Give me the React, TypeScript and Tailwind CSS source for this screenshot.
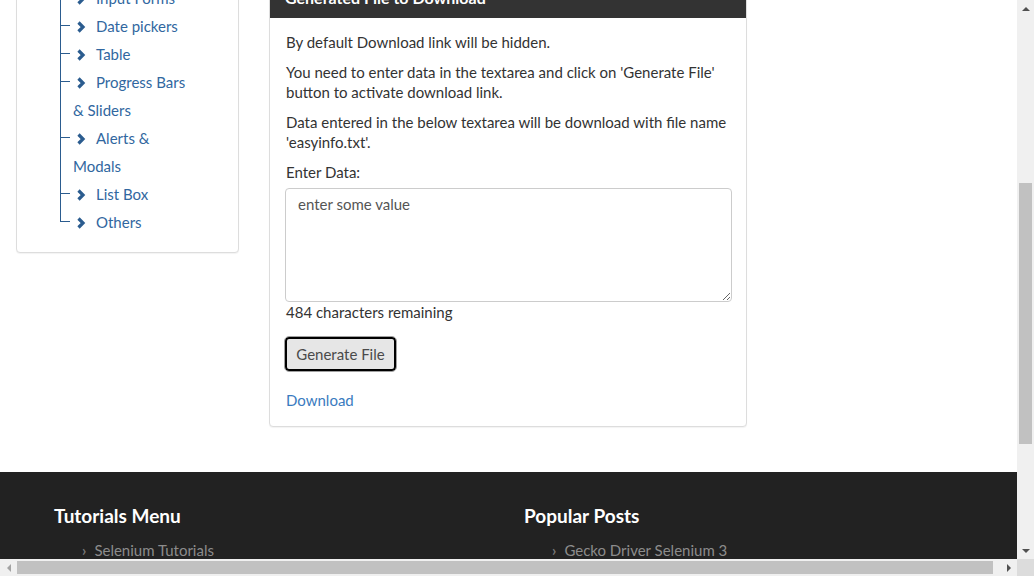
import React from 'react';

const treeItems: { lines: string[] }[] = [
  { lines: ['Input Forms'] },
  { lines: ['Date pickers'] },
  { lines: ['Table'] },
  { lines: ['Progress Bars', '& Sliders'] },
  { lines: ['Alerts &', 'Modals'] },
  { lines: ['List Box'] },
  { lines: ['Others'] },
];

const Chevron = () => (
  <svg width="10" height="12" viewBox="0 0 10 12" className="inline-block ml-[3px] mr-[10px] align-[-1px]">
    <polyline points="2.5,1.5 7,6 2.5,10.5" fill="none" stroke="#2b5c8f" strokeWidth="3.2" strokeLinejoin="miter" />
  </svg>
);

const Arrow = ({ dir, color }: { dir: 'up' | 'down' | 'left' | 'right'; color: string }) => {
  const pts = {
    up: '4,1 0,5 8,5',
    down: '0,1 8,1 4,5',
    left: '5,0 5,8 1,4',
    right: '1,0 1,8 5,4',
  }[dir];
  const w = dir === 'up' || dir === 'down' ? 8 : 6;
  const h = dir === 'up' || dir === 'down' ? 6 : 8;
  return (
    <svg width={w} height={h} viewBox={`0 0 ${w} ${h}`}>
      <polygon points={pts} fill={color} />
    </svg>
  );
};

const SideMenu = () => (
  <div className="w-[223px] shrink-0 rounded-[4px] border border-[#ddd] bg-white pt-[13px] pb-[16px] shadow-[0_1px_1px_rgba(0,0,0,0.05)]">
    <ul className="ml-[43px] w-[140px] text-[15px] text-[#3167a0]">
      {treeItems.map((item, i) => {
        const last = i === treeItems.length - 1;
        return (
          <li key={i} className="relative pl-[13px] leading-[28px]">
            <span className={last ? 'absolute left-0 top-0 h-[14px] w-px bg-[#2b5c8f]' : 'absolute left-0 top-0 h-full w-px bg-[#2b5c8f]'} />
            <span className="absolute left-0 top-[13px] h-px w-[10px] bg-[#2b5c8f]" />
            <Chevron />
            {item.lines.map((l, j) => (
              <React.Fragment key={j}>
                {j > 0 && <br />}
                <span className="whitespace-nowrap">{l}</span>
              </React.Fragment>
            ))}
          </li>
        );
      })}
    </ul>
  </div>
);

const FilePanel = () => (
  <div className="mt-[7px] w-[478px] shrink-0 overflow-hidden rounded-[4px] border border-[#ddd] bg-white shadow-[0_1px_1px_rgba(0,0,0,0.05)]">
    <div className="flex h-[40px] items-center bg-[#333] px-[15px] text-[16px] font-bold text-white">
      Generated File to Download
    </div>
    <div className="pl-[16px] pr-[15px] pt-[14px] pb-[16px] text-[15px] leading-[20px] text-[#333]">
      <p className="mb-[10px]">By default Download link will be hidden.</p>
      <p className="mb-[10px]">
        You need to enter data in the textarea and click on 'Generate File' button to activate download link.
      </p>
      <p className="mb-[10px]">
        Data entered in the below textarea will be download with file name 'easyinfo.txt'.
      </p>
      <p className="mb-[6px]">Enter Data:</p>
      <textarea
        className="ml-[-1px] block h-[114px] w-[447px] rounded-[4px] border border-[#ccc] px-[12px] py-[5px] text-[15px] leading-[20px] text-[#555] outline-none"
        defaultValue="enter some value"
      />
      <div>484 characters remaining</div>
      <button className="ml-[-1px] mt-[15px] block h-[34px] w-[111px] rounded-[4px] border-2 border-black bg-[#e6e6e6] text-[15px] text-[#4a4a4a] outline outline-1 outline-[#a0a0a0]">
        Generate File
      </button>
      <a className="mt-[19px] block text-[#3a7bc0]">Download</a>
    </div>
  </div>
);

const Footer = () => (
  <div className="mt-[45px] h-[200px] bg-[#222] pt-[30px] pl-[54px]">
    <div className="grid grid-cols-[470px_470px]">
      {[
        { title: 'Tutorials Menu', item: 'Selenium Tutorials' },
        { title: 'Popular Posts', item: 'Gecko Driver Selenium 3' },
      ].map((c) => (
        <div key={c.title}>
          <h3 className="text-[19px] font-bold leading-[28px] text-white">{c.title}</h3>
          <ul className="mt-[10px] pl-[28px] text-[15px] leading-[20px] text-[#8c8c8c]">
            <li className="flex items-center">
              <span className="mr-[8px] text-[15px] font-bold text-[#777]">›</span>
              {c.item}
            </li>
          </ul>
        </div>
      ))}
    </div>
  </div>
);

export default function App() {
  return (
    <div className="flex h-[576px] w-[1034px] flex-col overflow-hidden bg-white font-['Lato','Liberation_Sans',sans-serif]">
      <div className="flex h-[559px]">
        <div className="flex-1 overflow-hidden">
          <div className="mt-[-30px] flex items-start pl-[16px]">
            <SideMenu />
            <div className="ml-[30px]">
              <FilePanel />
            </div>
          </div>
          <Footer />
        </div>
        <div className="flex w-[17px] flex-col bg-[#f0f0f0]">
          <div className="flex h-[17px] items-center justify-center">
            <Arrow dir="up" color="#505050" />
          </div>
          <div className="flex-1 pt-[166px]">
            <div className="mx-auto h-[261px] w-[13px] bg-[#c1c1c1]" />
          </div>
          <div className="flex h-[17px] items-center justify-center">
            <Arrow dir="down" color="#505050" />
          </div>
        </div>
      </div>
      <div className="flex h-[17px] bg-[#f0f0f0]">
        <div className="flex w-[17px] items-center justify-center">
          <Arrow dir="left" color="#a3a3a3" />
        </div>
        <div className="flex flex-1 items-center">
          <div className="h-[13px] w-[976px] bg-[#c1c1c1]" />
        </div>
        <div className="flex w-[17px] items-center justify-center">
          <Arrow dir="right" color="#505050" />
        </div>
        <div className="w-[17px] bg-[#dcdcdc]" />
      </div>
    </div>
  );
}
